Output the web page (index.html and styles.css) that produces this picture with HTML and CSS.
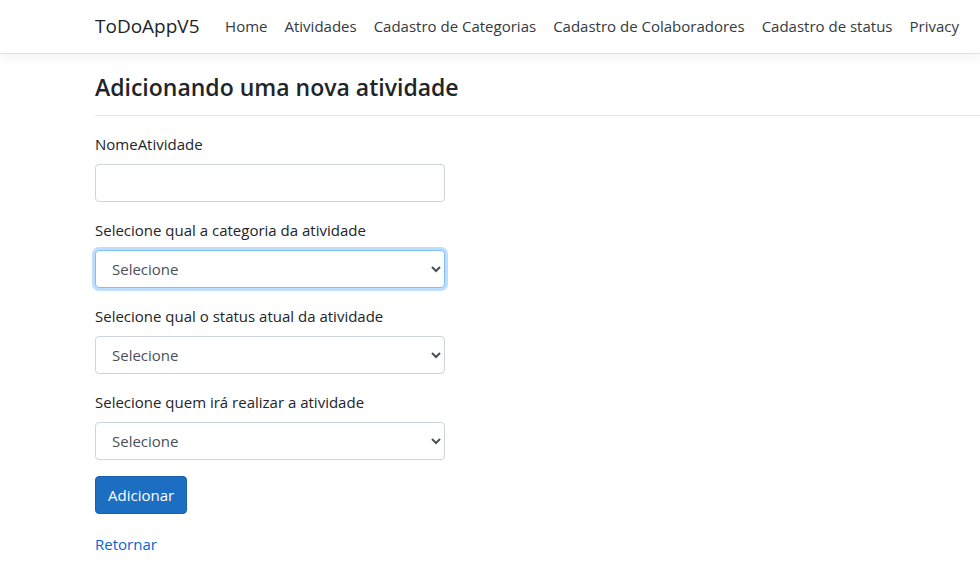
FILE: index.html
```html
<!DOCTYPE html>
<html lang="pt-br">
<head>
<meta charset="utf-8">
<title>Adicionando uma nova atividade - ToDoAppV5</title>
<link rel="stylesheet" href="styles.css">
</head>
<body>
<header class="navbar">
  <div class="container nav-inner">
    <a class="brand" href="#">ToDoAppV5</a>
    <ul class="nav-list">
      <li><a class="nav-link" href="#">Home</a></li>
      <li><a class="nav-link" href="#">Atividades</a></li>
      <li><a class="nav-link" href="#">Cadastro de Categorias</a></li>
      <li><a class="nav-link" href="#">Cadastro de Colaboradores</a></li>
      <li><a class="nav-link" href="#">Cadastro de status</a></li>
      <li><a class="nav-link" href="#">Privacy</a></li>
    </ul>
  </div>
</header>
<main class="container main">
  <h4 class="title">Adicionando uma nova atividade</h4>
  <hr class="rule">
  <form class="form">
    <div class="group">
      <label class="label">NomeAtividade</label>
      <input class="control" type="text">
    </div>
    <div class="group">
      <label class="label">Selecione qual a categoria da atividade</label>
      <select class="control select focused"><option>Selecione</option></select>
    </div>
    <div class="group">
      <label class="label">Selecione qual o status atual da atividade</label>
      <select class="control select"><option>Selecione</option></select>
    </div>
    <div class="group">
      <label class="label">Selecione quem irá realizar a atividade</label>
      <select class="control select"><option>Selecione</option></select>
    </div>
    <button class="btn" type="button">Adicionar</button>
  </form>
  <div class="back"><a class="link" href="#">Retornar</a></div>
</main>
</body>
</html>
```
FILE: styles.css
```css
* { box-sizing: border-box; }
html, body { margin: 0; padding: 0; }
body {
  font-family: "Open Sans", "Noto Sans", sans-serif;
  font-size: 15px;
  line-height: 24px;
  color: #212529;
  background: #fff;
  overflow: hidden;
}
.container { padding-left: 95px; padding-right: 0; }
.navbar {
  height: 54px;
  border-bottom: 1px solid #dee2e6;
  box-shadow: 0 .25rem .75rem rgba(0,0,0,.05);
  background: #fff;
}
.nav-inner {
  display: flex;
  align-items: center;
  height: 100%;
  padding-bottom: 2px;
  white-space: nowrap;
}
.brand {
  font-size: 19px;
  color: #212529;
  text-decoration: none;
  margin-right: 17px;
}
.nav-list { display: flex; list-style: none; margin: 0; padding: 0; }
.nav-link {
  display: block;
  padding: 0 8.5px;
  color: #343a40;
  text-decoration: none;
}
.main { padding-top: 19px; }
.title {
  font-size: 23px;
  font-weight: 600;
  line-height: 28px;
  margin: 0 0 8px;
}
.rule {
  border: 0;
  border-top: 1px solid rgba(0,0,0,.1);
  margin: 14px 0 16px;
}
.group { margin-bottom: 16px; width: 350px; }
.label { display: block; margin-bottom: 8px; }
.control {
  display: block;
  width: 100%;
  height: 38px;
  padding: 6px 12px;
  font-family: inherit;
  font-size: 15px;
  color: #495057;
  background: #fff;
  border: 1px solid #ced4da;
  border-radius: 4px;
}
.focused {
  border-color: #80bdff;
  box-shadow: 0 0 0 3px rgba(0,123,255,.25);
  outline: 0;
}
.btn {
  display: block;
  font-family: inherit;
  font-size: 15px;
  line-height: 24px;
  padding: 6px 12px;
  height: 38px;
  color: #fff;
  background: #1b6ec2;
  border: 1px solid #1861ac;
  border-radius: 4px;
}
.back { margin-top: 18px; }
.link { color: #0366d6; text-decoration: none; }
```
